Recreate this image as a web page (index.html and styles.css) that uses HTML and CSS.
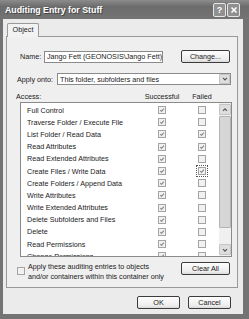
FILE: index.html
```html
<!DOCTYPE html>
<html lang="en">
<head>
  <meta charset="UTF-8">
  <title>Auditing Entry for Stuff</title>
  <link rel="stylesheet" href="styles.css">
</head>
<body>
  <div class="window">
    <div class="titlebar">
      <span class="title">Auditing Entry for Stuff</span>
      <div class="tbtns">
        <span class="tbtn">?</span>
        <span class="tbtn"><svg viewBox="0 0 10 10"><path d="M2.5 2.5l5 5M7.5 2.5l-5 5"/></svg></span>
      </div>
    </div>

    <div class="client">
      <div class="tabs"><div class="tab">Object</div></div>

      <div class="panel">
        <div class="name-row">
          <span class="lbl">Name:</span>
          <div class="field">Jango Fett (GEONOSIS\Jango Fett)</div>
          <button class="btn change">Change...</button>
        </div>

        <div class="apply-row">
          <span class="lbl">Apply onto:</span>
          <div class="select">
            <span>This folder, subfolders and files</span>
            <span class="drop"><svg viewBox="0 0 10 10"><path d="M2.5 3.5L5 6l2.5-2.5"/></svg></span>
          </div>
        </div>

        <div class="access-head">
          <span class="acc">Access:</span>
          <span class="col">Successful</span>
          <span class="col">Failed</span>
        </div>

        <div class="list">
          <div class="items">
            <div class="item"><span class="nm">Full Control</span><span class="cell"><i class="box on"></i></span><span class="cell"><i class="box"></i></span></div>
            <div class="item"><span class="nm">Traverse Folder / Execute File</span><span class="cell"><i class="box on"></i></span><span class="cell"><i class="box"></i></span></div>
            <div class="item"><span class="nm">List Folder / Read Data</span><span class="cell"><i class="box on"></i></span><span class="cell"><i class="box on"></i></span></div>
            <div class="item"><span class="nm">Read Attributes</span><span class="cell"><i class="box on"></i></span><span class="cell"><i class="box on"></i></span></div>
            <div class="item"><span class="nm">Read Extended Attributes</span><span class="cell"><i class="box on"></i></span><span class="cell"><i class="box"></i></span></div>
            <div class="item"><span class="nm">Create Files / Write Data</span><span class="cell"><i class="box on"></i></span><span class="cell"><i class="box on focus"></i></span></div>
            <div class="item"><span class="nm">Create Folders / Append Data</span><span class="cell"><i class="box on"></i></span><span class="cell"><i class="box"></i></span></div>
            <div class="item"><span class="nm">Write Attributes</span><span class="cell"><i class="box on"></i></span><span class="cell"><i class="box"></i></span></div>
            <div class="item"><span class="nm">Write Extended Attributes</span><span class="cell"><i class="box on"></i></span><span class="cell"><i class="box"></i></span></div>
            <div class="item"><span class="nm">Delete Subfolders and Files</span><span class="cell"><i class="box on"></i></span><span class="cell"><i class="box"></i></span></div>
            <div class="item"><span class="nm">Delete</span><span class="cell"><i class="box on"></i></span><span class="cell"><i class="box"></i></span></div>
            <div class="item"><span class="nm">Read Permissions</span><span class="cell"><i class="box on"></i></span><span class="cell"><i class="box"></i></span></div>
            <div class="item"><span class="nm">Change Permissions</span><span class="cell"><i class="box on"></i></span><span class="cell"><i class="box"></i></span></div>
          </div>
          <div class="scrollbar">
            <span class="sbtn"><svg viewBox="0 0 10 10"><path d="M2.5 6L5 3.5 7.5 6"/></svg></span>
            <span class="thumb"></span>
            <span class="track"></span>
            <span class="sbtn"><svg viewBox="0 0 10 10"><path d="M2.5 4L5 6.5 7.5 4"/></svg></span>
          </div>
        </div>

        <div class="apply-check">
          <i class="box"></i>
          <span class="apply-text">Apply these auditing entries to objects<br>and/or containers within this container only</span>
          <button class="btn clear">Clear All</button>
        </div>
      </div>

      <div class="footer">
        <button class="btn">OK</button>
        <button class="btn">Cancel</button>
      </div>
    </div>
  </div>
</body>
</html>
```

FILE: styles.css
```css
body {
  margin: 0;
  font-family: "Liberation Sans", Arial, sans-serif;
  font-size: 7.2px;
  color: #1a1a1a;
}
.window {
  width: 249px;
  height: 319px;
  display: flex;
  flex-direction: column;
  background: #737373;
}
.titlebar {
  height: 19px;
  display: flex;
  align-items: center;
  justify-content: space-between;
  padding: 0 9px 0 5px;
  background: linear-gradient(#8c8c8c, #6c6c6c 35%, #747474);
  color: #fff;
}
.title {
  font-weight: bold;
  font-size: 8.8px;
  text-shadow: 1px 1px #444;
}
.tbtns {
  display: flex;
  gap: 1px;
}
.tbtn {
  width: 11px;
  height: 12px;
  border: 1px solid #e6e6e6;
  border-radius: 2px;
  background: #909090;
  color: #fff;
  font-weight: bold;
  font-size: 9px;
  display: flex;
  align-items: center;
  justify-content: center;
}
.tbtn svg {
  width: 10px;
  height: 10px;
  stroke: #fff;
  stroke-width: 1.6;
}
.client {
  flex: 1;
  margin: 0 6px 5px 3px;
  padding: 4px 5px 0 3px;
  background: #ebebeb;
  display: flex;
  flex-direction: column;
}
.tabs {
  display: flex;
  padding-left: 1px;
}
.tab {
  position: relative;
  width: 32px;
  height: 14px;
  margin-bottom: -1px;
  box-sizing: border-box;
  border: 1px solid #999;
  border-bottom: none;
  border-radius: 2px 2px 0 0;
  background: #f2f2f2;
  text-align: center;
  line-height: 12px;
}
.panel {
  height: 252px;
  box-sizing: border-box;
  border: 1px solid #999;
  background: #efefef;
  padding-top: 13px;
}
.name-row {
  display: flex;
  align-items: center;
  height: 13px;
  padding-left: 13px;
}
.name-row .lbl {
  width: 24px;
}
.field {
  width: 119px;
  height: 12px;
  box-sizing: border-box;
  border: 1px solid #8a8a8a;
  background: #fff;
  padding-left: 2px;
  line-height: 10px;
  white-space: nowrap;
  overflow: hidden;
}
.btn {
  font: inherit;
  color: #1a1a1a;
  height: 13px;
  padding: 0;
  box-sizing: border-box;
  border: 1px solid #3c3c3c;
  border-radius: 2px;
  background: linear-gradient(#fdfdfd, #ececec 80%, #d8d8d8);
}
.change {
  width: 49px;
  margin-left: 18px;
}
.apply-row {
  display: flex;
  align-items: center;
  margin-top: 10px;
  padding-left: 10px;
}
.apply-row .lbl {
  width: 40px;
}
.select {
  width: 174px;
  height: 12px;
  box-sizing: border-box;
  border: 1px solid #8a8a8a;
  background: #fff;
  display: flex;
  align-items: center;
  justify-content: space-between;
  padding-left: 2px;
}
.drop, .sbtn {
  width: 11px;
  height: 10px;
  box-sizing: border-box;
  border: 1px solid #c4c4c4;
  border-radius: 1px;
  background: #dedede;
  display: flex;
  align-items: center;
  justify-content: center;
}
.drop svg, .sbtn svg {
  width: 8px;
  height: 8px;
  fill: none;
  stroke: #555;
  stroke-width: 1.5;
}
.access-head {
  display: flex;
  align-items: center;
  height: 9px;
  margin-top: 7px;
  padding-left: 9px;
}
.acc {
  width: 134px;
}
.col {
  width: 24px;
  display: flex;
  justify-content: center;
  white-space: nowrap;
}
.access-head .col + .col {
  margin-left: 16px;
}
.list {
  display: flex;
  width: 212px;
  height: 155px;
  box-sizing: border-box;
  margin: 1px 0 0 13px;
  border: 1px solid #8a8a8a;
  background: #fff;
  overflow: hidden;
}
.items {
  flex: 1;
  padding-top: 1px;
}
.item {
  display: flex;
  align-items: center;
  height: 12.2px;
}
.nm {
  width: 123px;
  padding-left: 6px;
  white-space: nowrap;
}
.cell {
  width: 24px;
  display: flex;
  justify-content: center;
}
.cell + .cell {
  margin-left: 16px;
}
.box {
  display: block;
  width: 8px;
  height: 8px;
  box-sizing: border-box;
  border: 1px solid #a4a4a4;
  background: #f1f1f1;
}
.box.on {
  background: #f1f1f1 url("data:image/svg+xml,%3Csvg xmlns='http://www.w3.org/2000/svg' viewBox='0 0 6 6'%3E%3Cpath d='M1.2 3l1.3 1.4L4.9 1.6' fill='none' stroke='%23888' stroke-width='1.1'/%3E%3C/svg%3E") center / 6px 6px no-repeat;
}
.focus {
  outline: 1px dotted #555;
  outline-offset: 1px;
}
.scrollbar {
  width: 12px;
  display: flex;
  flex-direction: column;
  background: #f0f0f0;
  padding: 1px 0;
  box-sizing: border-box;
}
.sbtn {
  width: 12px;
  height: 11px;
}
.thumb {
  height: 112px;
  margin-top: 1px;
  box-sizing: border-box;
  border: 1px solid #b4b4b4;
  border-radius: 1px;
  background: #d6d6d6;
}
.track {
  flex: 1;
}
.apply-check {
  display: flex;
  align-items: flex-start;
  margin-top: 5px;
  padding-left: 10px;
}
.apply-check .box {
  margin-top: 5px;
}
.apply-text {
  width: 153px;
  margin-left: 3px;
  line-height: 10px;
  white-space: nowrap;
}
.clear {
  width: 49px;
}
.footer {
  display: flex;
  justify-content: flex-end;
  gap: 8px;
  margin-top: 8px;
  padding-right: 7px;
}
.footer .btn {
  width: 43px;
}
```
